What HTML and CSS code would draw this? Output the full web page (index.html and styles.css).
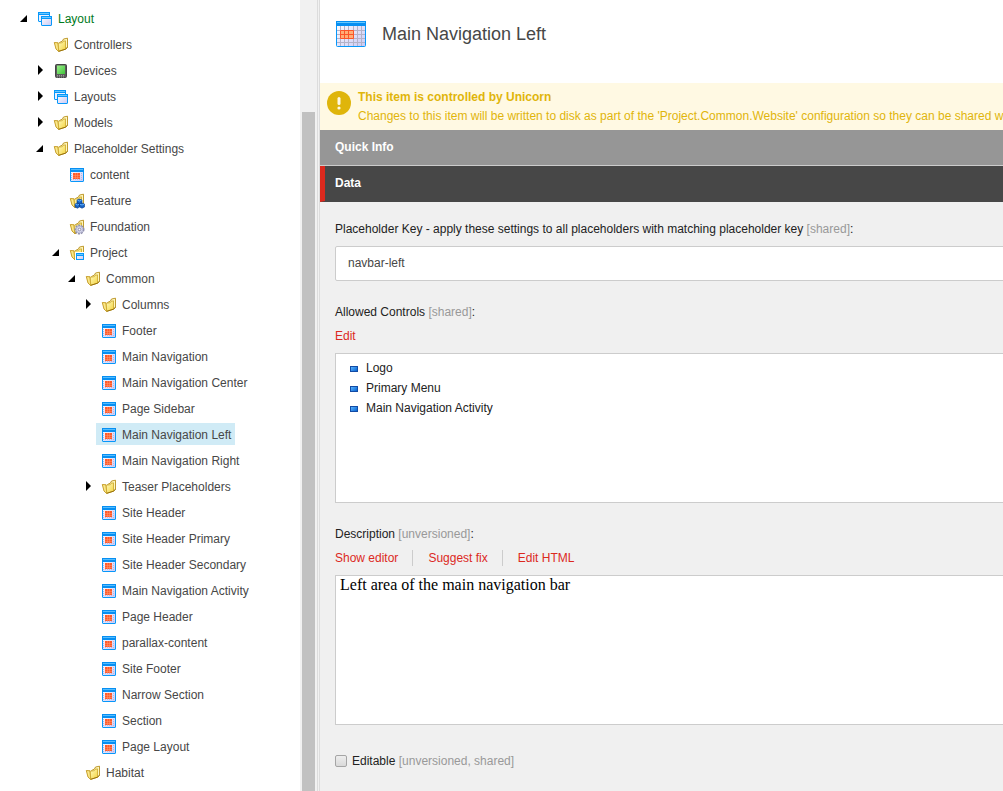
FILE: index.html
```
<!DOCTYPE html>
<html lang="en">
<head>
<meta charset="utf-8">
<title>Content Editor</title>
<link rel="stylesheet" href="styles.css">
</head>
<body>
<svg class="sprite" aria-hidden="true">
  <defs>
    <linearGradient id="g-gold" x1="0" y1="0" x2="1" y2="1"><stop offset="0" stop-color="#fffbc0"/><stop offset="1" stop-color="#f3d23c"/></linearGradient>
    <linearGradient id="g-sheet" x1="0" y1="0" x2="1" y2="1"><stop offset="0" stop-color="#ffffff"/><stop offset="1" stop-color="#c9c8f4"/></linearGradient>
    <linearGradient id="g-green" x1="0" y1="0" x2="1" y2="1"><stop offset="0" stop-color="#9cf08a"/><stop offset="1" stop-color="#3fc43a"/></linearGradient>
    <symbol id="open" viewBox="0 0 16 16"><path d="M11 5v7H4z"/></symbol>
    <symbol id="closed" viewBox="0 0 16 16"><path d="M6 3l5 5-5 5z"/></symbol>
    <symbol id="folder" viewBox="0 0 16 16">
      <path d="M6.500 5.500L9.500 4l1-2 4-.8v9.300L12 12z" fill="#fff7bd" stroke="#b8901c" stroke-width=".9"/>
      <path d="M1.300 5.500l3.700.3.700 8.700-2.700-2.500z" fill="#fbe98a" stroke="#c0941a" stroke-width=".9"/>
      <path d="M5.300 6.200l4-.5.900-1.400 2.300-.5v8.400l-6.800 2.200z" fill="url(#g-gold)" stroke="#cba62a" stroke-width=".8"/>
      <path d="M5.700 14.300l6.800-2.100 2-1.900" fill="none" stroke="#97700c"/>
    </symbol>
    <symbol id="windows" viewBox="0 0 16 16">
      <rect x="1.500" y="1.500" width="11" height="9" rx=".5" fill="#edf0ff" stroke="#0798fa"/>
      <path d="M1 1h12v3H1z" fill="#0798fa"/><path d="M2 2.500h10" stroke="#69c8ff"/>
      <path d="M4 5h12v10H4z" fill="#fff"/>
      <rect x="4.500" y="5.500" width="10" height="9" rx=".5" fill="url(#g-sheet)" stroke="#0798fa"/>
      <path d="M4 5h11v3H4z" fill="#0798fa"/><path d="M5 6.500h9" stroke="#69c8ff"/>
    </symbol>
    <symbol id="device" viewBox="0 0 16 16">
      <rect x="2.500" y="1.500" width="11" height="13" rx="1" fill="#5b5b5b" stroke="#444"/>
      <path d="M4 2.500h8v8.500H4z" fill="url(#g-green)"/>
      <path d="M4 12.500h8M4 14h8" stroke="#999" stroke-dasharray="1 1"/>
    </symbol>
    <symbol id="grid" viewBox="0 0 16 16">
      <rect x="1.500" y="1.500" width="13" height="13" rx=".5" fill="url(#g-sheet)" stroke="#0798fa"/>
      <path d="M1 1h14v4H1z" fill="#078ff2"/><path d="M2 2.500h12" stroke="#55bdff"/>
      <path d="M2 6.500h12M2 8.500h12M2 10.500h12M2 12.500h12" stroke="#b8b6df" stroke-dasharray="1 1"/>
      <path d="M4 6h7v6H4z" fill="#ff5929"/>
      <path d="M6.500 6v6M8.500 6v6M4 8.500h7M4 10.500h7" stroke="#ff9a70" stroke-width=".5"/>
    </symbol>
    <symbol id="grid-large" viewBox="0 0 32 28">
      <rect x="1.500" y="1.500" width="29" height="25" rx="1" fill="url(#g-sheet)" stroke="#0798fa"/>
      <path d="M1 1h30v5H1z" fill="#078ff2"/><path d="M2 2.500h28" stroke="#67c9ff"/>
      <path d="M2 10.500h28M2 14.500h28M2 18.500h28M2 22.500h28M5.500 6v20M9.500 6v20M13.500 6v20M18.500 6v20M22.500 6v20M26.500 6v20" stroke="#b4b2c8"/>
      <path d="M5.500 10.500h13v8h-13zM9.500 10.500v8M13.500 10.500v8M5.500 14.500h13" fill="#ffad76" stroke="#fb5428"/>
    </symbol>
    <symbol id="feature" viewBox="0 0 16 16">
      <use href="#folder"/>
      <path d="M8 7l2.500-1L13 7v3l-2.500 1L8 10zM6 11l2.500-1 2 1v3l-2 1.200L6 14zM10.500 11l2.500-1 2.500 1v3L13 15.200 10.500 14z" fill="#1762c4" stroke="#0b3f91" stroke-width=".6"/>
      <path d="M8.500 7.200l2 .8 2-.8M6.500 11.200l2 .8 1.500-.8M11 11.200l2 .8 2-.8" fill="none" stroke="#5eb2ff"/>
    </symbol>
    <symbol id="foundation" viewBox="0 0 16 16">
      <use href="#folder"/>
      <circle cx="10.500" cy="10.500" r="4.200" fill="#d6d6ec" stroke="#9191ae" stroke-width="1.600" stroke-dasharray="2 1"/>
      <circle cx="10.500" cy="10.500" r="3.200" fill="#d9daf0" stroke="#a3a4be" stroke-width=".6"/>
      <circle cx="10.500" cy="10.500" r="1.300" fill="#fff" stroke="#7d7d98" stroke-width=".8"/>
    </symbol>
    <symbol id="project" viewBox="0 0 16 16">
      <use href="#folder"/>
      <path d="M6 7h10v9H6z" fill="#fff"/>
      <rect x="7.500" y="8.500" width="7" height="6" fill="url(#g-sheet)" stroke="#0798fa"/>
      <path d="M7 8h8v3H7z" fill="#0798fa"/><path d="M8 9.500h6" stroke="#69c8ff"/>
    </symbol>
  </defs>
</svg>
<div class="app">
  <nav class="sidebar" aria-label="Content tree">
    <ul class="tree">
      <li><div class="row"><button class="toggle" aria-label="Collapse Layout"><svg><use href="#open"/></svg></button><a class="node node-root" href="#"><svg><use href="#windows"/></svg>Layout</a></div>
        <ul>
          <li><div class="row leaf"><a class="node" href="#"><svg><use href="#folder"/></svg>Controllers</a></div></li>
          <li><div class="row"><button class="toggle" aria-label="Expand Devices"><svg><use href="#closed"/></svg></button><a class="node" href="#"><svg><use href="#device"/></svg>Devices</a></div></li>
          <li><div class="row"><button class="toggle" aria-label="Expand Layouts"><svg><use href="#closed"/></svg></button><a class="node" href="#"><svg><use href="#windows"/></svg>Layouts</a></div></li>
          <li><div class="row"><button class="toggle" aria-label="Expand Models"><svg><use href="#closed"/></svg></button><a class="node" href="#"><svg><use href="#folder"/></svg>Models</a></div></li>
          <li><div class="row"><button class="toggle" aria-label="Collapse Placeholder Settings"><svg><use href="#open"/></svg></button><a class="node" href="#"><svg><use href="#folder"/></svg>Placeholder Settings</a></div>
            <ul>
              <li><div class="row leaf"><a class="node" href="#"><svg><use href="#grid"/></svg>content</a></div></li>
              <li><div class="row leaf"><a class="node" href="#"><svg><use href="#feature"/></svg>Feature</a></div></li>
              <li><div class="row leaf"><a class="node" href="#"><svg><use href="#foundation"/></svg>Foundation</a></div></li>
              <li><div class="row"><button class="toggle" aria-label="Collapse Project"><svg><use href="#open"/></svg></button><a class="node" href="#"><svg><use href="#project"/></svg>Project</a></div>
                <ul>
                  <li><div class="row"><button class="toggle" aria-label="Collapse Common"><svg><use href="#open"/></svg></button><a class="node" href="#"><svg><use href="#folder"/></svg>Common</a></div>
                    <ul>
                      <li><div class="row"><button class="toggle" aria-label="Expand Columns"><svg><use href="#closed"/></svg></button><a class="node" href="#"><svg><use href="#folder"/></svg>Columns</a></div></li>
                      <li><div class="row leaf"><a class="node" href="#"><svg><use href="#grid"/></svg>Footer</a></div></li>
                      <li><div class="row leaf"><a class="node" href="#"><svg><use href="#grid"/></svg>Main Navigation</a></div></li>
                      <li><div class="row leaf"><a class="node" href="#"><svg><use href="#grid"/></svg>Main Navigation Center</a></div></li>
                      <li><div class="row leaf"><a class="node" href="#"><svg><use href="#grid"/></svg>Page Sidebar</a></div></li>
                      <li><div class="row leaf"><a class="node node-active" href="#" aria-current="page"><svg><use href="#grid"/></svg>Main Navigation Left</a></div></li>
                      <li><div class="row leaf"><a class="node" href="#"><svg><use href="#grid"/></svg>Main Navigation Right</a></div></li>
                      <li><div class="row"><button class="toggle" aria-label="Expand Teaser Placeholders"><svg><use href="#closed"/></svg></button><a class="node" href="#"><svg><use href="#folder"/></svg>Teaser Placeholders</a></div></li>
                      <li><div class="row leaf"><a class="node" href="#"><svg><use href="#grid"/></svg>Site Header</a></div></li>
                      <li><div class="row leaf"><a class="node" href="#"><svg><use href="#grid"/></svg>Site Header Primary</a></div></li>
                      <li><div class="row leaf"><a class="node" href="#"><svg><use href="#grid"/></svg>Site Header Secondary</a></div></li>
                      <li><div class="row leaf"><a class="node" href="#"><svg><use href="#grid"/></svg>Main Navigation Activity</a></div></li>
                      <li><div class="row leaf"><a class="node" href="#"><svg><use href="#grid"/></svg>Page Header</a></div></li>
                      <li><div class="row leaf"><a class="node" href="#"><svg><use href="#grid"/></svg>parallax-content</a></div></li>
                      <li><div class="row leaf"><a class="node" href="#"><svg><use href="#grid"/></svg>Site Footer</a></div></li>
                      <li><div class="row leaf"><a class="node" href="#"><svg><use href="#grid"/></svg>Narrow Section</a></div></li>
                      <li><div class="row leaf"><a class="node" href="#"><svg><use href="#grid"/></svg>Section</a></div></li>
                      <li><div class="row leaf"><a class="node" href="#"><svg><use href="#grid"/></svg>Page Layout</a></div></li>
                    </ul>
                  </li>
                  <li><div class="row leaf"><a class="node" href="#"><svg><use href="#folder"/></svg>Habitat</a></div></li>
                </ul>
              </li>
            </ul>
          </li>
        </ul>
      </li>
    </ul>
  </nav>
  <div class="scroll-track"><div class="scroll-thumb"></div></div>
  <div class="splitter"></div>
  <main class="editor">
    <header class="title-bar">
      <svg class="title-icon"><use href="#grid-large"/></svg>
      <h1>Main Navigation Left</h1>
    </header>
    <section class="warning">
      <svg class="warning-icon" viewBox="0 0 24 24"><circle cx="12" cy="12" r="12" fill="#dfb50b"/><path d="M12 7.500v5" stroke="#fff9e3" stroke-width="3" stroke-linecap="round"/><circle cx="12" cy="17" r="1.600" fill="#fff9e3"/></svg>
      <div class="warning-text">
        <strong>This item is controlled by Unicorn</strong>
        <p>Changes to this item will be written to disk as part of the 'Project.Common.Website' configuration so they can be shared with</p>
      </div>
    </section>
    <button class="section-bar">Quick Info</button>
    <button class="section-bar section-bar-open">Data</button>
    <form class="fields">
      <div class="field">
        <label class="label" for="key">Placeholder Key - apply these settings to all placeholders with matching placeholder key <span class="hint">[shared]</span>:</label>
        <input class="text-input" id="key" type="text" value="navbar-left">
      </div>
      <div class="field">
        <div class="label">Allowed Controls <span class="hint">[shared]</span>:</div>
        <div class="actions"><a href="#">Edit</a></div>
        <ul class="box controls"><li>Logo</li><li>Primary Menu</li><li>Main Navigation Activity</li></ul>
      </div>
      <div class="field">
        <label class="label" for="description">Description <span class="hint">[unversioned]</span>:</label>
        <div class="actions"><a href="#">Show editor</a><a href="#">Suggest fix</a><a href="#">Edit HTML</a></div>
        <textarea class="box description" id="description">Left area of the main navigation bar</textarea>
      </div>
      <div class="check-field">
        <input class="check" id="editable" type="checkbox">
        <label for="editable">Editable <span class="hint">[unversioned, shared]</span></label>
      </div>
    </form>
  </main>
</div>
</body>
</html>
```
FILE: styles.css
```
* { box-sizing: border-box; }
body {
  margin: 0;
  font: 12px/16px "Liberation Sans", Arial, sans-serif;
  color: #222;
  background: #fff;
}
ul, h1, p { margin: 0; padding: 0; }
ul { list-style: none; }
a { text-decoration: none; }
button { border: 0; font: inherit; cursor: pointer; }
.sprite { position: absolute; width: 0; height: 0; }
.app { display: flex; height: 100vh; overflow: hidden; }

.sidebar { flex: 0 0 300px; overflow: hidden; }
.tree { padding: 5px 0 0 16px; }
.tree ul { padding-left: 16px; }
.row { display: flex; align-items: center; height: 26px; }
.leaf { padding-left: 16px; }
.toggle { flex: none; width: 16px; height: 16px; padding: 0; background: none; }
.toggle svg { display: block; width: 16px; height: 16px; }
.node {
  display: flex;
  align-items: center;
  gap: 5px;
  height: 22px;
  padding: 2px 4px 0 5px;
  color: #474747;
  white-space: nowrap;
}
.node svg { flex: none; width: 16px; height: 16px; }
.node-root { color: #007a1c; }
.node-active { background: #d0ebf6; }

.scroll-track { flex: 0 0 17px; padding: 112px 2px 0; background: #f1f1f1; }
.scroll-thumb { height: 100%; background: #c1c1c1; }
.splitter { flex: 0 0 3px; background: #f1f1f1; border: solid #dcdcdc; border-width: 0 1px; }

.editor { flex: 1; min-width: 0; overflow: hidden; background: #f0f0f0; }
.title-bar { display: flex; align-items: center; gap: 15px; height: 83px; padding: 0 15px 15px; background: #fff; }
.title-icon { width: 32px; height: 28px; }
.title-bar h1 { font-size: 18px; line-height: 24px; font-weight: 400; color: #474747; }
.warning { display: flex; gap: 7px; height: 47px; padding: 5px 0 0 7px; background: #fff9e3; color: #dfb50b; }
.warning-icon { flex: none; width: 24px; height: 24px; margin-top: 3px; }
.warning-text { line-height: 19px; white-space: nowrap; }
.warning-text strong { display: block; }
.section-bar {
  display: block;
  width: 100%;
  height: 36px;
  padding: 0 15px 2px;
  border-bottom: 1px solid #ccc;
  background: #969696;
  color: #fff;
  font-weight: 700;
  text-align: left;
}
.section-bar-open { padding-left: 10px; border-left: 5px solid #dc291e; border-bottom-color: #474747; background: #474747; }

.fields { margin-right: -15px; padding: 19px 0 0 15px; }
.field { display: flex; flex-direction: column; margin-bottom: 23px; }
.label { line-height: 16px; margin-bottom: 9px; white-space: nowrap; }
.hint { color: #999; }
.text-input {
  height: 35px;
  padding: 0 12px 2px;
  border: 1px solid #ccc;
  border-radius: 2px;
  background: #fff;
  color: #474747;
  font: inherit;
}
.actions { display: flex; margin: -1px 0 9px; line-height: 16px; }
.actions a { color: #dc291e; }
.actions a + a { margin-left: 14px; padding-left: 15px; border-left: 1px solid #ccc; }
.box { width: 100%; height: 150px; border: 1px solid #ccc; background: #fff; }
.controls { padding: 4px 14px; line-height: 20px; }
.controls li { display: flex; align-items: center; gap: 8px; }
.controls li::before {
  content: "";
  width: 8px;
  height: 6px;
  margin-top: 2px;
  border: 1px solid #124ba5;
  background: linear-gradient(135deg, #5bb5ff, #0863d0);
  box-sizing: border-box;
}
.description { display: block; padding: 0 4px; resize: none; overflow: hidden; font: 16px/18px "Liberation Serif", "Times New Roman", serif; color: #000; }
.check-field { display: flex; align-items: center; gap: 5px; padding-top: 5px; }
.check {
  appearance: none;
  width: 12px;
  height: 12px;
  margin: 0;
  border: 1px solid #a5a5a5;
  border-radius: 2px;
  background: linear-gradient(#eee, #d9d9d9);
}
.check:checked { background: #555; }
```
